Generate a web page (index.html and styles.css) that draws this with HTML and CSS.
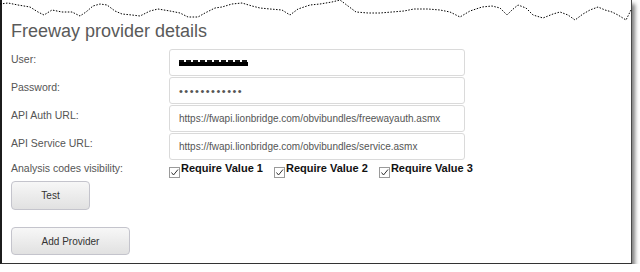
FILE: index.html
```html
<!DOCTYPE html>
<html lang="en">
<head>
  <meta charset="UTF-8">
  <title>Freeway provider details</title>
  <link rel="stylesheet" href="styles.css">
</head>
<body>
  <div class="sheet">
    <svg class="torn" width="629" height="20" viewBox="0 0 629 20">
      <polyline transform="translate(-2,0)" points="0,4 8,3 18,5 30,7 38,12 44,15 52,10 62,12 72,12 80,16 86,12 93,6 100,4 107,5 115,11 122,14 132,15 140,16 150,11 158,9 170,11 180,13 188,17 198,17 205,13 215,8 222,7 232,4 242,3 252,6 260,8 270,9 282,10 290,15 298,9 310,5 320,4 332,2 340,0 348,6 356,12 368,13 380,13 392,12 404,11 414,9 428,9 440,10 450,12 460,17 470,11 482,7 492,6 500,8 507,15 512,10 518,5 526,8 533,15 543,18 553,14 560,12 568,15 575,20 583,14 590,10 598,7 605,10 612,12 618,15 626,20 631,10"/>
    </svg>
    <h1 class="title">Freeway provider details</h1>
    <form class="details">
      <label class="field-label">User:</label>
      <div class="field"><span class="redacted"></span></div>
      <label class="field-label">Password:</label>
      <div class="field"><span class="dots">••••••••••••</span></div>
      <label class="field-label">API Auth URL:</label>
      <div class="field">https://fwapi.lionbridge.com/obvibundles/freewayauth.asmx</div>
      <label class="field-label">API Service URL:</label>
      <div class="field">https://fwapi.lionbridge.com/obvibundles/service.asmx</div>
      <label class="field-label checks-label">Analysis codes visibility:</label>
      <div class="checks">
        <label class="check">
          <svg width="11" height="11" viewBox="0 0 11 11"><rect x="0.5" y="0.5" width="10" height="10" fill="#fff" stroke="#9a9a9a"/><path d="M2.5 5.5 L4.5 8 L9 2.5" fill="none" stroke="#333" stroke-width="1"/></svg>
          Require Value 1
        </label>
        <label class="check">
          <svg width="11" height="11" viewBox="0 0 11 11"><rect x="0.5" y="0.5" width="10" height="10" fill="#fff" stroke="#9a9a9a"/><path d="M2.5 5.5 L4.5 8 L9 2.5" fill="none" stroke="#333" stroke-width="1"/></svg>
          Require Value 2
        </label>
        <label class="check">
          <svg width="11" height="11" viewBox="0 0 11 11"><rect x="0.5" y="0.5" width="10" height="10" fill="#fff" stroke="#9a9a9a"/><path d="M2.5 5.5 L4.5 8 L9 2.5" fill="none" stroke="#333" stroke-width="1"/></svg>
          Require Value 3
        </label>
      </div>
    </form>
    <div class="actions">
      <button type="button" class="btn btn-test">Test</button>
      <button type="button" class="btn btn-add">Add Provider</button>
    </div>
  </div>
</body>
</html>
```

FILE: styles.css
```css
body {
  font-family: "Liberation Sans", Arial, sans-serif;
  margin: 0;
  padding: 0;
  background: #fff;
}
.sheet {
  box-sizing: border-box;
  width: 632px;
  padding: 0 0 8px 9px;
  background: #fff;
  border-left: 2px solid #1c1c1c;
  border-right: 1px solid #4a4a4a;
  border-bottom: 1px solid #333;
  box-shadow: 3px 4px 4px rgba(0, 0, 0, 0.5);
}
.torn {
  display: block;
  margin-left: -9px;
  overflow: visible;
}
.torn polyline {
  fill: none;
  stroke: #000;
  stroke-width: 1;
  stroke-dasharray: 1.5 1.5;
}
.title {
  margin: 0;
  font-size: 18px;
  line-height: 22px;
  font-weight: normal;
  color: #5a5a5a;
}
.details {
  display: grid;
  grid-template-columns: 158px 296px;
  grid-template-rows: repeat(4, 27px) 20px;
  row-gap: 1px;
  margin-top: 7px;
}
.field-label {
  padding-top: 4px;
  font-size: 10.5px;
  line-height: 13px;
  color: #555;
}
.checks-label {
  padding-top: 1px;
}
.field {
  display: flex;
  align-items: center;
  box-sizing: border-box;
  padding: 0 9px;
  border: 1px solid #dadada;
  border-radius: 3px;
  font-size: 10px;
  color: #555;
}
.redacted {
  display: inline-block;
  width: 69px;
  height: 6px;
  background:
    linear-gradient(#000, #000) 0 2px / 100% 4px no-repeat,
    repeating-linear-gradient(90deg, #111 0 5px, transparent 5px 7px) 0 0 / 100% 2px no-repeat;
}
.dots {
  font-size: 11px;
  letter-spacing: 1.5px;
  color: #555;
  padding-top: 1px;
}
.checks {
  display: flex;
  gap: 11px;
  padding-top: 1px;
}
.check {
  display: flex;
  flex-shrink: 0;
  align-items: flex-start;
  gap: 1px;
  white-space: nowrap;
  font-size: 11px;
  line-height: 13px;
  font-weight: bold;
  color: #111;
}
.check svg {
  margin-top: 5px;
}
.actions {
  display: flex;
  flex-direction: column;
  align-items: flex-start;
  gap: 17px;
}
.btn {
  font-family: "Liberation Sans", Arial, sans-serif;
  font-size: 10px;
  color: #333;
  background: linear-gradient(#f7f7f7, #e1e1e1);
  border: 1px solid #c4c4cc;
  border-radius: 4px;
  padding: 0;
}
.btn-test {
  width: 79px;
  height: 29px;
}
.btn-add {
  width: 119px;
  height: 28px;
}
```
